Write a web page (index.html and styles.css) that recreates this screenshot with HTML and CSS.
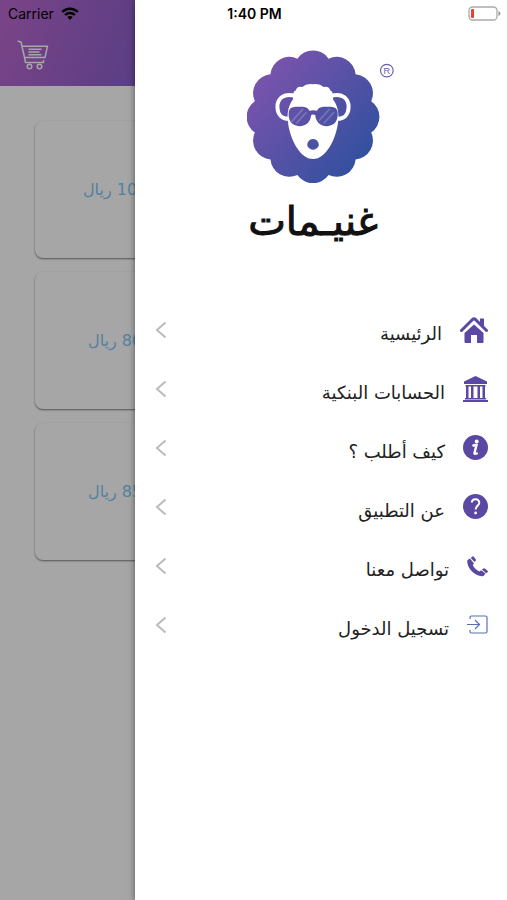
FILE: index.html
```html
<!DOCTYPE html>
<html lang="ar">
<head>
    <meta charset="UTF-8">
    <meta name="viewport" content="width=device-width, initial-scale=1.0">
    <title>غنيمات</title>
    <link rel="stylesheet" href="styles.css">
</head>
<body>
<div class="app">

    <div class="statusbar">
        <div class="carrier">
            <span>Carrier</span>
            <svg width="18" height="13" viewBox="0 0 18 13" fill="none" stroke="#000" stroke-width="2.4">
                <path d="M1.2 5C5.6 .7 12.4 .7 16.8 5"/>
                <path d="M4.1 8C6.9 5.3 11.1 5.3 13.9 8"/>
                <path d="M6.3 10.1Q9 7.8 11.7 10.1L9 12.9Z" fill="#000" stroke="none"/>
            </svg>
        </div>
        <div class="clock">1:40 PM</div>
        <div class="battery">
            <svg width="33" height="15" viewBox="0 0 33 15">
                <rect x="1" y="1" width="28" height="13" rx="3.5" fill="none" stroke="#aaa" stroke-width="1.3"/>
                <rect x="3" y="3" width="3" height="9" rx="1" fill="#f8392f"/>
                <path d="M30.5 5v5q2-.8 2-2.5t-2-2.5z" fill="#999"/>
            </svg>
        </div>
    </div>

    <div class="page">
        <header>
            <button class="cart" type="button" aria-label="السلة">
                <svg width="32" height="30" viewBox="0 0 32 30" fill="none" stroke="#fff" stroke-width="1.5" stroke-linecap="round" stroke-linejoin="round">
                    <path d="M1 1.2l3 .8 4.200 18.5M5 6.200h25.500L28 17.500H7.700M8.200 20.500q-.5 2 1.300 2H26.500V20.500"/>
                    <path d="M12 9.200h12M12 12h10M12 14.800h12"/>
                    <circle cx="12.500" cy="26.500" r="2.300"/>
                    <circle cx="22.500" cy="26.500" r="2.300"/>
                </svg>
            </button>
        </header>
        <div class="cards">
            <div class="card"><div class="price" dir="rtl">1050 ريال</div></div>
            <div class="card"><div class="price" dir="rtl">800 ريال</div></div>
            <div class="card"><div class="price" dir="rtl">850 ريال</div></div>
        </div>
        <div class="shade"></div>
    </div>

    <aside class="drawer" dir="rtl">
        <div class="logo">
            <svg viewBox="38 30 444 400" width="148" height="133">
                <defs>
                    <linearGradient id="wool" gradientUnits="userSpaceOnUse" x1="70" y1="90" x2="400" y2="370">
                        <stop offset="0" stop-color="#7d53ad"/>
                        <stop offset="1" stop-color="#30509f"/>
                    </linearGradient>
                </defs>
                <path fill="url(#wool)" d="M189 56A57 57 0 0 1 283 56A57 57 0 0 1 364 103A57 57 0 0 1 411 184A57 57 0 0 1 411 278A57 57 0 0 1 364 359A57 57 0 0 1 283 406A57 57 0 0 1 189 406A57 57 0 0 1 108 359A57 57 0 0 1 61 278A57 57 0 0 1 61 184A57 57 0 0 1 108 103A57 57 0 0 1 189 56Z"/>
                <path fill="none" stroke="#fff" stroke-width="12" d="M184 169C150 158 128 174 129 203C130 225 143 238 165 237M288 169C322 158 344 174 343 203C342 225 329 238 307 237"/>
                <path fill="#fff" d="M176 178Q174 154 184 152Q187 137 204 141Q216 130 236 133Q256 130 268 141Q285 137 288 152Q298 154 296 178C309 195 314 216 312 242C307 295 276 358 236 358C196 358 165 295 160 242C158 216 163 195 176 178Z"/>
                <path fill="url(#wool)" d="M163 216C166 199 183 200 199 201C217 201 222 206 225 213Q236 210 248 213C251 206 256 201 274 201C290 200 307 199 310 216C313 244 299 259 278 259C256 259 244 244 243 226Q236 222 230 226C229 244 217 259 195 259C174 259 160 244 163 216Z"/>
                <path stroke="#fff" stroke-opacity=".2" stroke-width="5" d="M171 246l35-39M186 251l30-34M254 243l32-36M268 251l31-34"/>
                <path fill="url(#wool)" d="M236 298C247 298 255 309 253 319C248 327 242 330 236 330C230 330 224 327 219 319C217 309 225 298 236 298Z"/>
                <circle cx="458" cy="92" r="19" fill="none" stroke="#6c5cae" stroke-width="3.5"/>
                <text class="reg" x="458" y="102" text-anchor="middle">R</text>
            </svg>
            <div class="brand">غنيـمات</div>
        </div>

        <nav class="menu">
            <a href="#" class="item">
                <svg width="28" height="28" viewBox="0 0 28 28" fill="#5a48a4">
                    <path d="M14 8.500L23.500 17V26q0 1-1 1H17v-8h-6v8H5.500q-1 0-1-1V17Z"/>
                    <path d="M20 2.500h4v8l-4-4z"/>
                    <path d="M1.500 14.500L12.500 3.500Q14 2.200 15.500 3.500L26.500 14.500" fill="none" stroke="#5a48a4" stroke-width="3" stroke-linecap="round" stroke-linejoin="round"/>
                </svg>
                <span class="label">الرئيسية</span>
                <svg class="arrow" width="12" height="18" viewBox="0 0 12 18"><path d="M10.500 1.500L2 9l8.500 7.500"/></svg>
            </a>
            <a href="#" class="item">
                <svg width="25" height="26" viewBox="0 0 25 26" fill="#5a48a4">
                    <path d="M12.500 0L24 5.500v2.500H1V5.500zM2.500 9h20v1.500h-20zM3 10h2.500v12H3zM8 10h2.500v12H8zM14.500 10H17v12h-2.500zM19.500 10H22v12h-2.500zM2 22h21v1.500H2zM0 24h25v2H0z"/>
                </svg>
                <span class="label">الحسابات البنكية</span>
                <svg class="arrow" width="12" height="18" viewBox="0 0 12 18"><path d="M10.500 1.500L2 9l8.500 7.500"/></svg>
            </a>
            <a href="#" class="item">
                <svg width="25" height="25" viewBox="0 0 25 25">
                    <circle cx="12.500" cy="12.500" r="12.500" fill="#5a48a4"/>
                    <circle cx="13.700" cy="6.500" r="2" fill="#fff"/>
                    <path d="M9.500 11q2-1.300 4-1l-2 8q-.2 1.800 3.200 0" fill="none" stroke="#fff" stroke-width="2.400"/>
                </svg>
                <span class="label">كيف أطلب ؟</span>
                <svg class="arrow" width="12" height="18" viewBox="0 0 12 18"><path d="M10.500 1.500L2 9l8.500 7.500"/></svg>
            </a>
            <a href="#" class="item">
                <svg width="25" height="25" viewBox="0 0 25 25">
                    <circle cx="12.500" cy="12.500" r="12.500" fill="#5a48a4"/>
                    <path d="M8.800 8.500C9 4 16.500 4.200 16.300 8.700C16.200 11.500 12.700 11.500 12.700 15.500" fill="none" stroke="#fff" stroke-width="2"/>
                    <circle cx="12.600" cy="19" r="1.400" fill="#fff"/>
                </svg>
                <span class="label">عن التطبيق</span>
                <svg class="arrow" width="12" height="18" viewBox="0 0 12 18"><path d="M10.500 1.500L2 9l8.500 7.500"/></svg>
            </a>
            <a href="#" class="item">
                <svg width="21" height="22" viewBox="0 0 21 22" fill="#5a48a4">
                    <path d="M0.500 5L3 3.500L7 8.500L5.800 10C7 13 10 15.500 12.500 16.500L14.200 15.200L18.500 18.500L16.500 21C13 22 8 19.500 5 16.500C1.500 13 -.5 8 .5 5Z"/>
                    <path d="M3.800 3l1.500-1.500q.8-.6 1.500.2l2 2.800q.4.800-.2 1.300L7.500 7zM14.900 14.600l1.500-1.200q.7-.4 1.400.1l2.800 2.200q.6.600.1 1.300L19.200 18.200z"/>
                </svg>
                <span class="label">تواصل معنا</span>
                <svg class="arrow" width="12" height="18" viewBox="0 0 12 18"><path d="M10.500 1.500L2 9l8.500 7.500"/></svg>
            </a>
            <a href="#" class="item">
                <svg width="21" height="20" viewBox="0 0 21 20" fill="none" stroke="#5871ae" stroke-width="1.200">
                    <path d="M3 4V2.500Q3 1 4.500 1H18.500Q20 1 20 2.500V16.500Q20 18 18.500 18H4.500Q3 18 3 16.500V15M0 9.500h12.500M8 5l4.500 4.500L8 14"/>
                </svg>
                <span class="label">تسجيل الدخول</span>
                <svg class="arrow" width="12" height="18" viewBox="0 0 12 18"><path d="M10.500 1.500L2 9l8.500 7.500"/></svg>
            </a>
        </nav>
    </aside>

</div>
</body>
</html>
```
FILE: styles.css
```css
*{
    margin: 0;
    padding: 0;
    box-sizing: border-box;
}
body{
    font-family: "DejaVu Sans", sans-serif;
    background-color: #fff;
}
.app{
    position: relative;
    min-height: 100vh;
    overflow: hidden;
}

/* status bar lies over the page and the drawer */
.statusbar{
    position: absolute;
    top: 0;
    left: 0;
    right: 0;
    z-index: 3;
    display: grid;
    grid-template-columns: 1fr auto 1fr;
    align-items: center;
    height: 27px;
    padding: 0 6px 0 8px;
    font-family: Inter, sans-serif;
    font-size: 14px;
    color: #000;
}
.carrier{
    display: flex;
    align-items: center;
    gap: 7px;
}
.clock{
    font-weight: 600;
}
.battery{
    display: flex;
    justify-content: flex-end;
}

.page{
    position: relative;
    min-height: 100vh;
}
header{
    height: 86px;
    padding: 40px 17px 0;
    background-image: linear-gradient(110deg, #bd68d0, #8860cc 32%, #4d7cc8);
}
.cart{
    display: block;
    border: none;
    background: none;
}
.cart svg{
    display: block;
}
.cards{
    display: flex;
    flex-direction: column;
    gap: 14px;
    padding: 35px;
}
.card{
    display: flex;
    align-items: center;
    height: 137px;
    border-radius: 8px;
    background-color: #fff;
    box-shadow: 0 1px 2px rgba(0,0,0,0.5);
}
.price{
    width: 39%;
    text-align: center;
    white-space: nowrap;
    font-size: 16px;
    color: #7fc8f5;
}
.shade{
    position: absolute;
    top: 0;
    left: 0;
    right: 0;
    bottom: 0;
    background-color: rgba(0,0,0,0.35);
}

/* side menu */
.drawer{
    position: absolute;
    top: 0;
    right: 0;
    bottom: 0;
    left: 135px;
    z-index: 2;
    padding-top: 50px;
    background-color: #fff;
    box-shadow: 0 0 6px rgba(0,0,0,0.5);
}
.logo{
    width: 148px;
    margin: 0 auto;
}
.logo svg{
    display: block;
}
.reg{
    font-family: "Liberation Sans", sans-serif;
    font-size: 28px;
    fill: #6c5cae;
}
.brand{
    padding-right: 16px;
    height: 118px;
    line-height: 76px;
    text-align: center;
    white-space: nowrap;
    font-size: 40px;
    color: #111;
    -webkit-text-stroke: 1px #111;
}
.menu{
    display: flex;
    flex-direction: column;
}
.item{
    display: flex;
    align-items: center;
    gap: 18px;
    height: 59px;
    padding: 0 19px 2px 20px;
    text-decoration: none;
    color: #222;
}
.label{
    flex: 1;
    padding-top: 8px;
    font-size: 18px;
    line-height: 24px;
}
.arrow{
    fill: none;
    stroke: #bbb;
    stroke-width: 2;
}
```
